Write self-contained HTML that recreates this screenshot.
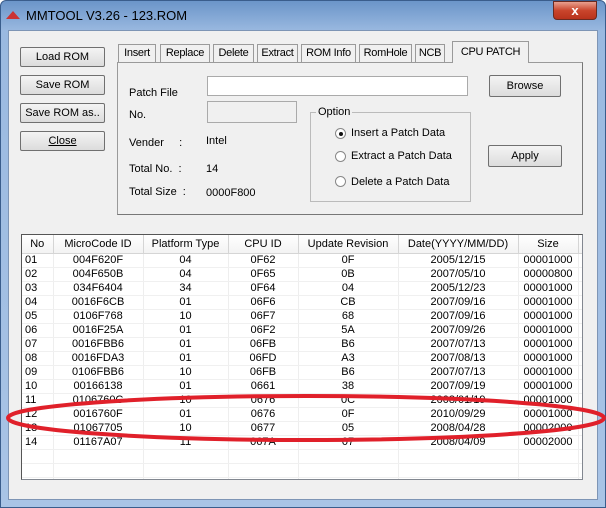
<!DOCTYPE html><html><head><style>
*{margin:0;padding:0;box-sizing:border-box}
body{width:606px;height:508px;overflow:hidden;background:#fff;font-family:"Liberation Sans",sans-serif;font-size:11px;color:#000;position:relative}
.a{position:absolute}
.win{left:0;top:0;width:606px;height:508px;background:linear-gradient(#6b95c9,#9ab9e0 30px,#a9c4e6);border:1px solid #3a5d8c;border-radius:6px 6px 0 0}
.client{left:8px;top:30px;width:590px;height:470px;background:#f0f0f0;border:1px solid #7e95b5}
.btn{position:absolute;background:linear-gradient(#f4f4f4,#dcdcdc);border:1px solid #707070;border-radius:2px;text-align:center;line-height:18px;font-size:11px}
.tab{position:absolute;top:44px;height:18px;border:1px solid #9a9a9a;border-bottom:none;background:#f0f0f0;font-size:11px;line-height:17px;text-align:center;letter-spacing:-0.3px}
.lbl{position:absolute;font-size:11px}
table{border-collapse:collapse;font-size:11px;table-layout:fixed}
td{height:14px;line-height:13px;text-align:center;padding:0;border-right:1px solid #eee;border-bottom:1px solid #f0f0f0;overflow:hidden;white-space:nowrap}
th{font-weight:normal;height:18px;border-right:1px solid #d5d5d5;border-bottom:1px solid #d5d5d5;background:linear-gradient(#fff,#f3f3f3);white-space:nowrap;overflow:hidden}
</style></head><body>
<div class="a win"></div>
<div class="a" style="left:6px;top:11px;width:14px;height:8px;background:#c33;clip-path:polygon(50% 0,100% 100%,0 100%)"></div>
<div class="a" style="left:26px;top:8px;font-size:13px;color:#000">MMTOOL V3.26 - 123.ROM</div>
<div class="a" style="left:553px;top:1px;width:44px;height:19px;background:linear-gradient(#e8a08f,#c9452c 50%,#b8321c);border:1px solid #6a2a20;border-radius:0 0 4px 4px;color:#fff;font-weight:bold;text-align:center;font-size:13px;line-height:17px">x</div>
<div class="a client"></div>
<div class="btn" style="left:20px;top:47px;width:85px;height:20px">Load ROM</div>
<div class="btn" style="left:20px;top:75px;width:85px;height:20px">Save ROM</div>
<div class="btn" style="left:20px;top:103px;width:85px;height:20px">Save ROM as..</div>
<div class="btn" style="left:20px;top:131px;width:85px;height:20px;text-decoration:underline">Close</div>
<div class="a" style="left:117px;top:62px;width:466px;height:153px;border:1px solid #9a9a9a;border-right-color:#777;border-bottom-color:#777;background:#f0f0f0"></div>
<div class="tab" style="left:118px;width:38px">Insert</div>
<div class="tab" style="left:160px;width:50px">Replace</div>
<div class="tab" style="left:213px;width:41px">Delete</div>
<div class="tab" style="left:257px;width:41px">Extract</div>
<div class="tab" style="left:301px;width:55px">ROM Info</div>
<div class="tab" style="left:359px;width:53px">RomHole</div>
<div class="tab" style="left:415px;width:30px">NCB</div>
<div class="tab" style="left:452px;top:41px;width:77px;height:22px;line-height:20px">CPU PATCH</div>
<div class="lbl" style="left:129px;top:87px">Patch File</div>
<div class="a" style="left:207px;top:76px;width:261px;height:20px;background:#fff;border:1px solid #aaa"></div>
<div class="lbl" style="left:129px;top:109px">No.</div>
<div class="a" style="left:207px;top:101px;width:90px;height:22px;border:1px solid #aaa"></div>
<div class="lbl" style="left:129px;top:137px">Vender &nbsp; &nbsp; :</div>
<div class="lbl" style="left:206px;top:135px">Intel</div>
<div class="lbl" style="left:129px;top:163px">Total No. &nbsp;:</div>
<div class="lbl" style="left:206px;top:163px">14</div>
<div class="lbl" style="left:129px;top:186px">Total Size &nbsp;:</div>
<div class="lbl" style="left:206px;top:187px">0000F800</div>
<div class="a" style="left:310px;top:112px;width:161px;height:90px;border:1px solid #bbb"></div>
<div class="lbl" style="left:316px;top:106px;background:#f0f0f0;padding:0 2px">Option</div>
<div class="a" style="left:335px;top:128px;width:11px;height:11px;border:1px solid #888;border-radius:50%;background:#fff"><div class="a" style="left:3px;top:3px;width:4px;height:4px;border-radius:50%;background:#111"></div></div>
<div class="a" style="left:335px;top:151px;width:11px;height:11px;border:1px solid #888;border-radius:50%;background:#fff"></div>
<div class="a" style="left:335px;top:176px;width:11px;height:11px;border:1px solid #888;border-radius:50%;background:#fff"></div>
<div class="lbl" style="left:351px;top:127px">Insert a Patch Data</div>
<div class="lbl" style="left:351px;top:150px">Extract a Patch Data</div>
<div class="lbl" style="left:351px;top:176px">Delete a Patch Data</div>
<div class="btn" style="left:489px;top:75px;width:72px;height:22px;line-height:20px">Browse</div>
<div class="btn" style="left:488px;top:145px;width:74px;height:22px;line-height:20px">Apply</div>
<div class="a" style="left:21px;top:234px;width:562px;height:246px;background:#fff;border:1px solid #828790;border-left-color:#555;border-top-color:#555;overflow:hidden">
<table style="width:584px">
<colgroup><col style="width:31px"><col style="width:90px"><col style="width:85px"><col style="width:70px"><col style="width:100px"><col style="width:120px"><col style="width:60px"><col style="width:28px"></colgroup>
<tr><th>No</th><th>MicroCode ID</th><th>Platform Type</th><th>CPU ID</th><th>Update Revision</th><th>Date(YYYY/MM/DD)</th><th>Size</th><th></th></tr>
<tr><td style="text-align:left;padding-left:3px">01</td><td>004F620F</td><td>04</td><td>0F62</td><td>0F</td><td>2005/12/15</td><td>00001000</td><td></td></tr>
<tr><td style="text-align:left;padding-left:3px">02</td><td>004F650B</td><td>04</td><td>0F65</td><td>0B</td><td>2007/05/10</td><td>00000800</td><td></td></tr>
<tr><td style="text-align:left;padding-left:3px">03</td><td>034F6404</td><td>34</td><td>0F64</td><td>04</td><td>2005/12/23</td><td>00001000</td><td></td></tr>
<tr><td style="text-align:left;padding-left:3px">04</td><td>0016F6CB</td><td>01</td><td>06F6</td><td>CB</td><td>2007/09/16</td><td>00001000</td><td></td></tr>
<tr><td style="text-align:left;padding-left:3px">05</td><td>0106F768</td><td>10</td><td>06F7</td><td>68</td><td>2007/09/16</td><td>00001000</td><td></td></tr>
<tr><td style="text-align:left;padding-left:3px">06</td><td>0016F25A</td><td>01</td><td>06F2</td><td>5A</td><td>2007/09/26</td><td>00001000</td><td></td></tr>
<tr><td style="text-align:left;padding-left:3px">07</td><td>0016FBB6</td><td>01</td><td>06FB</td><td>B6</td><td>2007/07/13</td><td>00001000</td><td></td></tr>
<tr><td style="text-align:left;padding-left:3px">08</td><td>0016FDA3</td><td>01</td><td>06FD</td><td>A3</td><td>2007/08/13</td><td>00001000</td><td></td></tr>
<tr><td style="text-align:left;padding-left:3px">09</td><td>0106FBB6</td><td>10</td><td>06FB</td><td>B6</td><td>2007/07/13</td><td>00001000</td><td></td></tr>
<tr><td style="text-align:left;padding-left:3px">10</td><td>00166138</td><td>01</td><td>0661</td><td>38</td><td>2007/09/19</td><td>00001000</td><td></td></tr>
<tr><td style="text-align:left;padding-left:3px">11</td><td>0106760C</td><td>10</td><td>0676</td><td>0C</td><td>2008/01/19</td><td>00001000</td><td></td></tr>
<tr><td style="text-align:left;padding-left:3px">12</td><td>0016760F</td><td>01</td><td>0676</td><td>0F</td><td>2010/09/29</td><td>00001000</td><td></td></tr>
<tr><td style="text-align:left;padding-left:3px">13</td><td>01067705</td><td>10</td><td>0677</td><td>05</td><td>2008/04/28</td><td>00002000</td><td></td></tr>
<tr><td style="text-align:left;padding-left:3px">14</td><td>01167A07</td><td>11</td><td>067A</td><td>07</td><td>2008/04/09</td><td>00002000</td><td></td></tr>
<tr><td></td><td></td><td></td><td></td><td></td><td></td><td></td><td></td></tr>
<tr><td></td><td></td><td></td><td></td><td></td><td></td><td></td><td></td></tr>
<tr><td></td><td></td><td></td><td></td><td></td><td></td><td></td><td></td></tr>
</table></div>
<svg class="a" style="left:0;top:0" width="606" height="508"><ellipse cx="306" cy="418" rx="298" ry="22" fill="none" stroke="#e0202a" stroke-width="4"/></svg>
</body></html>
